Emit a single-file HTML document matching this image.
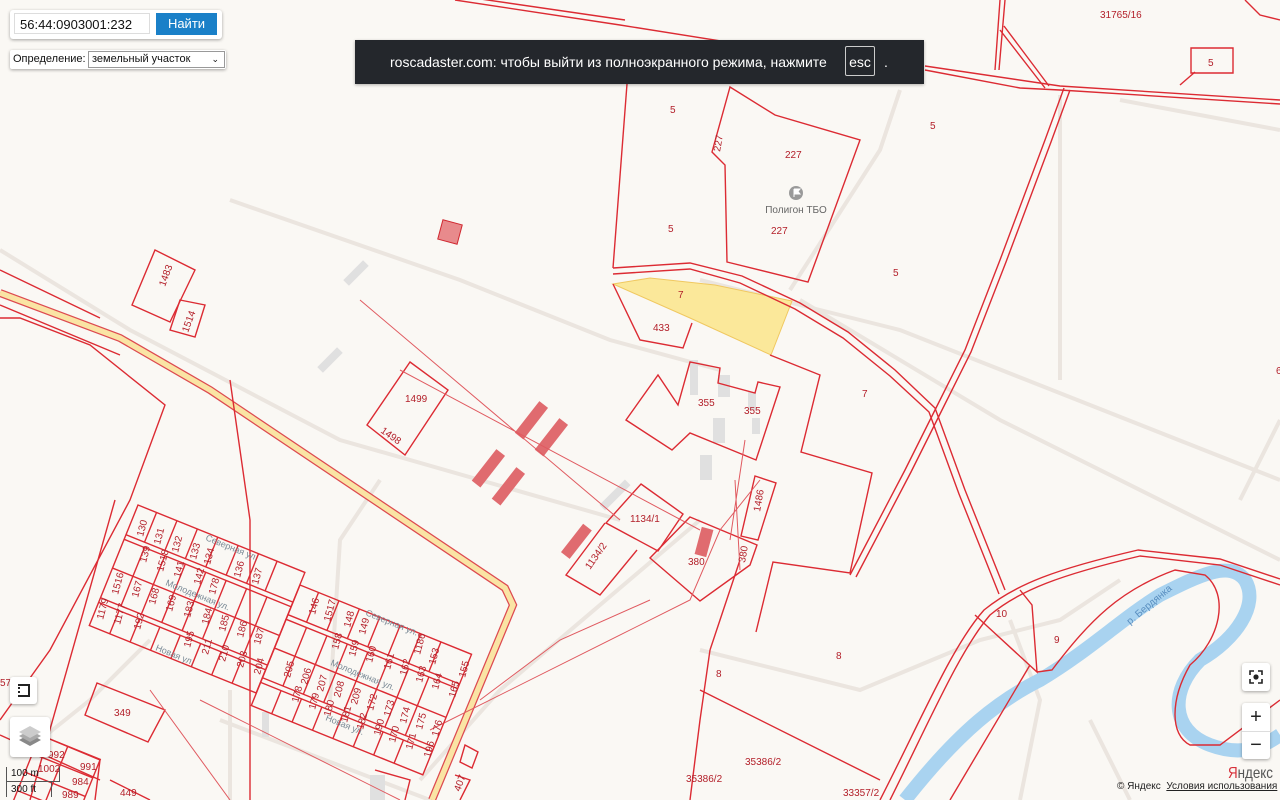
<!DOCTYPE html>
<html><head><meta charset="utf-8">
<style>
html,body{margin:0;padding:0;width:1280px;height:800px;overflow:hidden;background:#faf8f4;font-family:"Liberation Sans",sans-serif}
svg{position:absolute;left:0;top:0}
.r{fill:none;stroke:#dc2b33;stroke-width:1.4}
.rf{fill:none;stroke:#e05a60;stroke-width:1}
.g{fill:none;stroke:#ebe5df;stroke-width:4}
.t{font-family:"Liberation Sans Narrow","Liberation Sans",sans-serif;font-size:10px;fill:#b3202a}
.box{position:absolute;background:#fff;box-shadow:0 1px 3px rgba(0,0,0,.35);border-radius:3px}
</style></head><body>
<svg width="1280" height="800" viewBox="0 0 1280 800">
<g class="g">
<path d="M0,250 L130,330 L340,440 L620,520"/>
<path d="M230,200 L460,280 L610,340 L720,370"/>
<path d="M700,280 L900,330 L1280,480"/>
<path d="M800,300 L1000,420 L1280,560"/>
<path d="M1060,95 L1060,380"/>
<path d="M1120,100 L1280,130"/>
<path d="M900,90 L880,150 L790,290"/>
<path d="M700,650 L860,690 L980,640 L1060,620 L1120,580"/>
<path d="M150,640 L90,700 L40,740"/>
<path d="M220,720 L430,800"/>
<path d="M230,690 L230,800"/>
<path d="M330,700 L340,540 L380,480"/>
<path d="M700,520 L500,690 L420,780"/>
<path d="M1010,620 L1040,700 L1020,800"/>
<path d="M1090,720 L1130,800"/>
<path d="M1240,500 L1280,420"/>
</g>
<path d="M905,800 C960,730 1000,700 1040,680 C1090,650 1120,620 1160,595 C1200,575 1230,560 1245,580 C1260,605 1235,640 1200,660 C1170,690 1170,730 1210,745 C1245,758 1265,745 1280,735" fill="none" stroke="#a9d3f0" stroke-width="14"/>
<text x="1130" y="625" font-size="10" fill="#5a8fc0" transform="rotate(-40 1130 625)">р. Бердянка</text>
<path d="M613,284 L650,278 L715,285 L792,301 L771,355 L690,318 Z" fill="#fbe89a" stroke="#f0c860" stroke-width="1"/>
<path d="M0,293 L120,338 L210,390 L505,588 L513,605 L432,800" fill="none" stroke="#dd4a50" stroke-width="8"/>
<path d="M0,293 L120,338 L210,390 L505,588 L513,605 L432,800" fill="none" stroke="#fae4a4" stroke-width="5.5"/>
<g fill="#e0e0e0">
<rect x="-4" y="-14" width="8" height="28" transform="translate(356,273) rotate(45)"/>
<rect x="-4" y="-14" width="8" height="28" transform="translate(330,360) rotate(45)"/>
<rect x="-4" y="-18" width="8" height="36" transform="translate(615,495) rotate(45)"/>
<rect x="690" y="360" width="8" height="35"/><rect x="718" y="375" width="12" height="22"/>
<rect x="713" y="418" width="12" height="25"/><rect x="700" y="455" width="12" height="25"/>
<rect x="748" y="392" width="8" height="18"/><rect x="752" y="418" width="8" height="16"/>
<rect x="262" y="712" width="7" height="25"/><rect x="370" y="775" width="15" height="25"/>
</g>
<g fill="#e06b6f">
<rect x="-5" y="-20" width="11" height="40" transform="translate(531,420) rotate(38)"/>
<rect x="-5" y="-20" width="11" height="40" transform="translate(551,437) rotate(38)"/>
<rect x="-5" y="-20" width="11" height="40" transform="translate(488,468) rotate(38)"/>
<rect x="-5" y="-20" width="11" height="40" transform="translate(508,486) rotate(38)"/>
<rect x="-5" y="-18" width="11" height="36" transform="translate(576,541) rotate(38)"/>
<rect x="698" y="528" width="12" height="28" transform="rotate(15 704 542)"/>
<rect x="440" y="222" width="20" height="20" fill="#e88a8c" stroke="#d02830" transform="rotate(15 450 232)"/>
</g>
<g class="r">
<path d="M455,0 L620,25 L765,48"/>
<path d="M460,-4 L625,20"/>
<path d="M925,70 L1020,88 L1060,90 L1280,104"/>
<path d="M925,66 L1060,86 L1280,100"/>
<path d="M1000,0 L995,70 M1005,0 L999,70"/>
<path d="M1000,30 L1045,88 M1004,26 L1049,86"/>
<path d="M1191,48 L1233,48 L1233,73 L1191,73 Z"/>
<path d="M1180,85 L1195,72"/>
<path d="M1245,0 L1260,15 L1280,20"/>
<path d="M627,84 L613,268"/>
<path d="M730,87 L775,115 L860,140 L808,282 L727,262 L725,165 L712,152 Z"/>
<path d="M613,268 L690,263 L742,276 L800,303 L848,332 L895,370 L935,408 L965,490 L1005,590"/>
<path d="M613,274 L690,269 L740,283 L795,309 L843,338 L890,376 L929,412 L959,494 L999,594"/>
<path d="M1064,88 L1045,140 L1000,260 L965,350 L935,410 L905,470 L850,575"/>
<path d="M1070,90 L1051,142 L1006,262 L971,352 L941,412 L911,472 L856,577"/>
<path d="M613,284 L640,340 L683,348 L692,323"/>
<path d="M626,420 L658,375 L678,405 L690,362 L720,368 L718,383 L755,393 L758,382 L780,387 L756,460 L690,433 L672,450 Z"/>
<path d="M770,355 L820,375 L801,452 L872,473 L850,573 L773,562 L756,632"/>
<path d="M755,476 L776,483 L758,540 L741,536 Z"/>
<path d="M641,484 L683,514 L658,551 L606,523 Z"/>
<path d="M605,523 L566,575 L600,595 L637,550"/>
<path d="M690,517 L757,545 L750,565 L700,601 L650,558 Z"/>
<path d="M710,650 L700,720 L690,800"/>
<path d="M710,650 L740,560"/>
<path d="M700,690 L880,780"/>
<path d="M890,800 C930,720 960,650 990,615 C1020,590 1060,575 1140,556 L1220,565 L1280,585"/>
<path d="M880,800 C922,718 952,646 984,610 C1016,584 1056,569 1138,550 L1220,559 L1280,579"/>
<path d="M975,615 L1037,672 L1032,605 L1020,590 M1037,672 L1052,670 C1090,620 1120,590 1175,570 L1205,575 C1230,595 1220,640 1190,665 C1170,700 1170,735 1190,745 L1220,745 L1280,700"/>
<path d="M1030,665 L950,800"/>
<path d="M155,250 L195,270 L170,322 L132,305 Z"/>
<path d="M180,300 L205,305 L195,337 L170,330 Z"/>
<path d="M410,362 L448,390 L405,455 L367,425 Z"/>
<path d="M0,270 L100,318 M0,305 L120,355"/>
<path d="M0,318 L20,318 L90,345 L165,405 L130,500 L50,650 L0,720"/>
<path d="M97,683 L165,710 L148,742 L85,715 Z"/>
<path d="M230,380 L250,520 L250,800"/>
<path d="M115,500 L30,800"/>
<path d="M0,735 L100,780 M40,735 L100,760 L95,800"/>
<path d="M110,780 L150,800"/>
<path d="M465,745 L478,752 L472,768 L460,762 Z"/>
<path d="M455,775 L470,780 L460,800"/>
<path d="M375,770 L410,780 L405,800"/>
</g>
<g class="rf">
<path d="M360,300 L620,520 M400,370 L700,530"/>
<path d="M430,730 L690,600 L720,530 L760,480"/>
<path d="M150,690 L230,800 M200,700 L400,800"/>
<path d="M480,700 L560,640 L650,600"/>
<path d="M735,480 L740,570 M745,440 L730,540"/>
</g>
<g transform="translate(138,505) rotate(22)" class="r">
<rect x="0" y="0" width="180" height="130"/>
<path d="M0,32 L180,32 M0,37 L180,37 M0,68 L180,68 M0,100 L180,100 M0,105 L180,105"/>
<path d="M20,0 V32 M42,0 V32 M64,0 V32 M86,0 V32 M108,0 V32 M130,0 V32 M150,0 V32 M22,37 V68 M44,37 V68 M66,37 V68 M88,37 V68 M110,37 V68 M132,37 V68 M154,37 V68 M22,68 V100 M44,68 V100 M66,68 V100 M88,68 V100 M110,68 V100 M132,68 V100 M154,68 V100 M22,105 V130 M44,105 V130 M66,105 V130 M88,105 V130 M110,105 V130 M132,105 V130 M154,105 V130"/>
</g>
<g transform="translate(300,585) rotate(22)" class="r">
<rect x="0" y="0" width="185" height="130"/>
<path d="M0,32 L185,32 M0,37 L185,37 M0,68 L185,68 M0,100 L185,100 M0,105 L185,105"/>
<path d="M20,0 V32 M42,0 V32 M64,0 V32 M86,0 V32 M108,0 V32 M130,0 V32 M152,0 V32 M22,37 V68 M44,37 V68 M66,37 V68 M88,37 V68 M110,37 V68 M132,37 V68 M154,37 V68 M22,68 V100 M44,68 V100 M66,68 V100 M88,68 V100 M110,68 V100 M132,68 V100 M154,68 V100 M22,105 V130 M44,105 V130 M66,105 V130 M88,105 V130 M110,105 V130 M132,105 V130 M154,105 V130"/>
</g>
<g transform="translate(40,735) rotate(22)" class="r"><rect x="0" y="0" width="65" height="80"/><path d="M30,0 V80 M0,20 H65 M0,40 H65 M0,60 H65"/></g>
<g class="t">
<text x="1100" y="18">31765/16</text><text x="1208" y="66">5</text>
<text x="670" y="113">5</text><text x="785" y="158">227</text><text x="771" y="234">227</text><text x="668" y="232">5</text>
<text x="930" y="129">5</text><text x="893" y="276">5</text><text x="678" y="298">7</text><text x="653" y="331">433</text>
<text x="698" y="406">355</text><text x="744" y="414">355</text><text x="862" y="397">7</text>
<text x="630" y="522">1134/1</text><text x="688" y="565">380</text><text x="836" y="659">8</text><text x="716" y="677">8</text>
<text x="996" y="617">10</text><text x="1054" y="643">9</text>
<text x="745" y="765">35386/2</text><text x="686" y="782">35386/2</text><text x="843" y="796">33357/2</text>
<text x="405" y="402">1499</text><text x="114" y="716">349</text><text x="120" y="796">449</text>
<text x="1276" y="374">6</text><text x="0" y="686">57</text>
<text transform="translate(720,152) rotate(-80)">227</text>
<text transform="translate(165,287) rotate(-70)">1483</text>
<text transform="translate(188,333) rotate(-70)">1514</text>
<text transform="translate(745,563) rotate(-80)">380</text>
<text transform="translate(760,512) rotate(-80)">1486</text>
<text transform="translate(590,570) rotate(-55)">1134/2</text>
<text transform="translate(380,432) rotate(35)">1498</text>
<text transform="translate(460,792) rotate(-70)">407</text>
</g>
<g class="t" font-size="9">
<text transform="translate(143,537) rotate(-75)">130</text><text transform="translate(160,545) rotate(-75)">131</text><text transform="translate(178,553) rotate(-75)">132</text><text transform="translate(196,560) rotate(-75)">133</text><text transform="translate(210,565) rotate(-75)">134</text><text transform="translate(240,578) rotate(-75)">136</text><text transform="translate(258,585) rotate(-75)">137</text>
<text transform="translate(146,563) rotate(-75)">139</text><text transform="translate(163,572) rotate(-75)">1518</text><text transform="translate(180,578) rotate(-75)">141</text><text transform="translate(200,585) rotate(-75)">142</text><text transform="translate(215,595) rotate(-75)">178</text>
<text transform="translate(118,595) rotate(-75)">1516</text><text transform="translate(138,598) rotate(-75)">167</text><text transform="translate(155,605) rotate(-75)">168</text><text transform="translate(172,612) rotate(-75)">169</text><text transform="translate(190,618) rotate(-75)">183</text><text transform="translate(208,625) rotate(-75)">184</text><text transform="translate(225,632) rotate(-75)">185</text><text transform="translate(243,638) rotate(-75)">186</text><text transform="translate(260,645) rotate(-75)">187</text>
<text transform="translate(103,620) rotate(-75)">1179</text><text transform="translate(120,625) rotate(-75)">1177</text><text transform="translate(140,630) rotate(-75)">192</text><text transform="translate(190,648) rotate(-75)">195</text><text transform="translate(208,655) rotate(-75)">211</text><text transform="translate(225,662) rotate(-75)">210</text><text transform="translate(243,668) rotate(-75)">203</text><text transform="translate(260,675) rotate(-75)">204</text>
<text transform="translate(315,615) rotate(-75)">146</text><text transform="translate(330,622) rotate(-75)">1517</text><text transform="translate(350,628) rotate(-75)">148</text><text transform="translate(365,635) rotate(-75)">149</text><text transform="translate(420,655) rotate(-75)">1186</text><text transform="translate(435,665) rotate(-75)">153</text><text transform="translate(465,678) rotate(-75)">155</text>
<text transform="translate(338,650) rotate(-75)">158</text><text transform="translate(355,657) rotate(-75)">159</text><text transform="translate(372,663) rotate(-75)">160</text><text transform="translate(390,670) rotate(-75)">161</text><text transform="translate(406,676) rotate(-75)">162</text><text transform="translate(422,683) rotate(-75)">163</text><text transform="translate(438,690) rotate(-75)">164</text><text transform="translate(455,698) rotate(-75)">165</text>
<text transform="translate(290,678) rotate(-75)">205</text><text transform="translate(307,685) rotate(-75)">206</text><text transform="translate(323,692) rotate(-75)">207</text><text transform="translate(340,698) rotate(-75)">208</text><text transform="translate(357,705) rotate(-75)">209</text><text transform="translate(373,711) rotate(-75)">172</text><text transform="translate(390,717) rotate(-75)">173</text><text transform="translate(406,724) rotate(-75)">174</text><text transform="translate(422,730) rotate(-75)">175</text><text transform="translate(438,737) rotate(-75)">176</text>
<text transform="translate(298,703) rotate(-75)">178</text><text transform="translate(315,710) rotate(-75)">179</text><text transform="translate(330,717) rotate(-75)">180</text><text transform="translate(347,723) rotate(-75)">181</text><text transform="translate(363,730) rotate(-75)">182</text><text transform="translate(380,736) rotate(-75)">190</text><text transform="translate(395,743) rotate(-75)">170</text><text transform="translate(412,750) rotate(-75)">171</text><text transform="translate(430,758) rotate(-75)">196</text>
<text x="80" y="770">991</text><text x="72" y="785">984</text><text x="62" y="798">989</text><text x="48" y="758">992</text><text x="38" y="772">1002</text>
</g>
<g font-size="9" fill="#7a8a96">
<text transform="translate(205,540) rotate(22)">Северная ул.</text>
<text transform="translate(165,585) rotate(22)">Молодежная ул.</text>
<text transform="translate(155,650) rotate(22)">Новая ул.</text>
<text transform="translate(365,615) rotate(22)">Северная ул.</text>
<text transform="translate(330,665) rotate(22)">Молодежная ул.</text>
<text transform="translate(325,720) rotate(22)">Новая ул.</text>
</g>
<circle cx="796" cy="193" r="7" fill="#9a9a9a"/><path d="M794,189 V197 M794,189 H800 L798,191.5 L800,194 H794" fill="#fff" stroke="#fff" stroke-width="1"/>
<text x="796" y="213" font-size="10" fill="#666" text-anchor="middle">Полигон ТБО</text>
<text x="1228" y="778" font-size="16" fill="#d7303a" textLength="45" lengthAdjust="spacingAndGlyphs">Я<tspan fill="#555">ндекс</tspan></text>
</svg>

<div class="box" style="left:10px;top:10px;width:212px;height:29px"></div>
<div style="position:absolute;left:14px;top:13px;width:136px;height:21px;background:#fff;border:1px solid #ddd;font-size:13px;line-height:21px;padding-left:5px;box-sizing:border-box;color:#111">56:44:0903001:232</div>
<div style="position:absolute;left:156px;top:13px;width:61px;height:22px;background:#1a80c8;color:#fff;font-size:13px;line-height:22px;text-align:center">Найти</div>
<div class="box" style="left:10px;top:50px;width:216px;height:19px;border-radius:2px"></div>
<div style="position:absolute;left:13px;top:50px;font-size:11px;line-height:19px;color:#111">Определение:</div>
<div style="position:absolute;left:88px;top:51px;width:137px;height:17px;border:1px solid #999;box-sizing:border-box;background:#fff;font-size:11px;line-height:15px;padding-left:3px;color:#111">земельный участок<span style="position:absolute;right:5px;top:0;font-size:9px">&#8964;</span></div>

<div style="position:absolute;left:355px;top:40px;width:569px;height:44px;background:#24272c;color:#fff;font-size:14px;line-height:44px;box-shadow:0 1px 3px rgba(0,0,0,.3)"><span style="position:absolute;left:35px">roscadaster.com: чтобы выйти из полноэкранного режима, нажмите</span><span style="position:absolute;left:490px;top:6px;width:30px;height:30px;border:1px solid #ccc;border-radius:2px;line-height:30px;text-align:center;box-sizing:border-box">esc</span><span style="position:absolute;left:529px">.</span></div>

<div class="box" style="left:10px;top:677px;width:27px;height:27px"><div style="position:absolute;left:8px;top:7px;width:10px;height:11px;border:2px solid #222;border-top:none;border-right:none;border-left-style:dotted"></div><div style="position:absolute;left:8px;top:7px;width:12px;height:13px;border:2px solid #222;box-sizing:border-box;border-left:none;border-bottom:none"></div></div>
<div class="box" style="left:10px;top:717px;width:40px;height:40px"><svg width="40" height="40"><path d="M9,23 L20,17 L31,23 L20,29 Z" fill="#888"/><path d="M9,19 L20,13 L31,19 L20,25 Z" fill="#aaa"/><path d="M9,15 L20,9 L31,15 L20,21 Z" fill="#ccc"/></svg></div>
<div style="position:absolute;left:6px;top:767px;width:54px;height:32px;font-size:10px;color:#111"><div style="border-left:1px solid #555;border-right:1px solid #555;border-bottom:1px solid #555;padding-left:4px;height:14px;line-height:14px">100 m</div><div style="border-left:1px solid #555;padding-left:4px;line-height:15px;width:40px;border-right:1px solid #555">300 ft</div></div>

<div class="box" style="left:1242px;top:663px;width:28px;height:28px"><svg width="28" height="28"><path d="M8,12 V8 H12 M16,8 H20 V12 M20,16 V20 H16 M12,20 H8 V16" fill="none" stroke="#222" stroke-width="1.6"/><circle cx="14" cy="14" r="2.6" fill="#222"/></svg></div>
<div class="box" style="left:1242px;top:703px;width:28px;height:56px"><div style="height:28px;line-height:28px;text-align:center;font-size:20px;color:#222;border-bottom:1px solid #ddd">+</div><div style="height:27px;line-height:26px;text-align:center;font-size:20px;color:#222">−</div></div>
<div style="position:absolute;left:1117px;top:781px;font-size:10px;color:#222">© Яндекс&nbsp;&nbsp;<span style="text-decoration:underline">Условия использования</span></div>
</body></html>
